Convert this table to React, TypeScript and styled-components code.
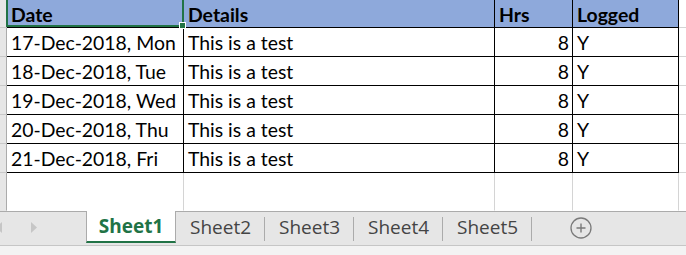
import styled, { createGlobalStyle } from 'styled-components';

const GlobalStyle = createGlobalStyle`
  html, body {
    margin: 0;
    padding: 0;
    background: #fff;
  }
  body {
    width: 686px;
    height: 255px;
    overflow: hidden;
    font-family: Lato, 'Liberation Sans', sans-serif;
  }
`;

const LINE = {
  black: '#000',
  grid: '#d4d4d4',
  none: 'transparent',
};
type Line = keyof typeof LINE;

const EXCEL_GREEN = '#217346';

const rows = [
  '17-Dec-2018, Mon',
  '18-Dec-2018, Tue',
  '19-Dec-2018, Wed',
  '20-Dec-2018, Thu',
  '21-Dec-2018, Fri',
];

const sheets = ['Sheet1', 'Sheet2', 'Sheet3', 'Sheet4', 'Sheet5'];

const Window = styled.div`
  display: flex;
  flex-direction: column;
  width: 686px;
  height: 255px;
  overflow: hidden;
`;

const Sheet = styled.div`
  display: grid;
  grid-template-columns: 7px 177px 311px 78px 106px 1fr;
  grid-template-rows: 28px repeat(5, 29px) 38px;
  flex: none;
`;

const RowHead = styled.div<{ $last?: boolean }>`
  background: #e6e6e6;
  border-right: 1px solid #ababab;
  border-bottom: 1px solid ${(p) => (p.$last ? 'transparent' : '#c8c8c8')};
`;

const Cell = styled.div<{
  $head?: boolean;
  $num?: boolean;
  $right: Line;
  $bottom: Line;
}>`
  box-sizing: border-box;
  display: flex;
  align-items: center;
  justify-content: ${(p) => (p.$num ? 'flex-end' : 'flex-start')};
  padding: 1px 3px 0 4px;
  background: ${(p) => (p.$head ? '#8ea9db' : '#fff')};
  border-right: 1px solid ${(p) => LINE[p.$right]};
  border-bottom: 1px solid ${(p) => LINE[p.$bottom]};
  font-size: 19.4px;
  font-weight: ${(p) => (p.$head ? 700 : 400)};
  color: #000;
  white-space: nowrap;
  overflow: hidden;
`;

const SelectedCell = styled(Cell)`
  position: relative;
  overflow: visible;
  z-index: 2;

  &::after {
    content: '';
    position: absolute;
    top: -2px;
    left: -1px;
    right: -1px;
    bottom: 0;
    border: 2px solid ${EXCEL_GREEN};
    pointer-events: none;
  }

  &::before {
    content: '';
    position: absolute;
    right: -3px;
    bottom: -2px;
    width: 5px;
    height: 5px;
    background: ${EXCEL_GREEN};
    border: 1px solid #fff;
    z-index: 3;
  }
`;

const TabBar = styled.div`
  display: flex;
  align-items: flex-start;
  height: 33px;
  background: #e6e6e6;
  border-top: 1px solid #ababab;
  border-bottom: 1px solid #c6c6c6;
  flex: none;
`;

const Nav = styled.div`
  width: 86px;
  height: 33px;
  flex: none;
  display: flex;
  align-items: center;
`;

const Tab = styled.div<{ $active?: boolean }>`
  position: relative;
  box-sizing: border-box;
  flex: none;
  display: flex;
  align-items: center;
  justify-content: center;
  font-family: 'Open Sans', 'Noto Sans', sans-serif;
  font-size: 19px;
  white-space: nowrap;
  ${(p) =>
    p.$active
      ? `
    width: 90px;
    height: 32px;
    margin-top: -1px;
    padding-bottom: 1px;
    background: #fff;
    border-left: 1px solid #ababab;
    border-right: 1px solid #ababab;
    border-bottom: 2px solid ${EXCEL_GREEN};
    color: ${EXCEL_GREEN};
    font-weight: 700;
  `
      : `
    width: 89px;
    height: 33px;
    padding-bottom: 3px;
    color: #444;
    &::after {
      content: '';
      position: absolute;
      right: 0;
      top: 5px;
      height: 24px;
      width: 1px;
      background: #ababab;
    }
  `}
`;

const AddSheet = styled.div`
  margin-left: 38px;
  height: 33px;
  display: flex;
  align-items: center;
  padding-bottom: 1px;
  box-sizing: border-box;
`;

const Footer = styled.div`
  flex: 1;
  background: #f3f3f3;
`;

export default function App() {
  return (
    <Window>
      <GlobalStyle />
      <Sheet>
        <RowHead />
        <SelectedCell $head $right="black" $bottom="black">
          Date
        </SelectedCell>
        <Cell $head $right="black" $bottom="black">
          Details
        </Cell>
        <Cell $head $right="black" $bottom="black">
          Hrs
        </Cell>
        <Cell $head $right="black" $bottom="black">
          Logged
        </Cell>
        <Cell $right="none" $bottom="grid" />

        {rows.map((date) => (
          <>
            <RowHead key={`h-${date}`} />
            <Cell key={`d-${date}`} $right="black" $bottom="black">
              {date}
            </Cell>
            <Cell key={`t-${date}`} $right="black" $bottom="black">
              This is a test
            </Cell>
            <Cell key={`n-${date}`} $num $right="black" $bottom="black">
              8
            </Cell>
            <Cell key={`y-${date}`} $right="black" $bottom="black">
              Y
            </Cell>
            <Cell key={`e-${date}`} $right="none" $bottom="grid" />
          </>
        ))}

        <RowHead $last />
        <Cell $right="grid" $bottom="none" />
        <Cell $right="grid" $bottom="none" />
        <Cell $right="grid" $bottom="none" />
        <Cell $right="grid" $bottom="none" />
        <Cell $right="none" $bottom="none" />
      </Sheet>

      <TabBar>
        <Nav>
          <svg width="86" height="33" viewBox="0 0 86 33">
            <polygon points="-4,15.5 2,10 2,21" fill="#c6c6c6" />
            <polygon points="31,10 37,15.5 31,21" fill="#c6c6c6" />
          </svg>
        </Nav>
        {sheets.map((name, i) => (
          <Tab key={name} $active={i === 0}>
            {name}
          </Tab>
        ))}
        <AddSheet>
          <svg width="22" height="22" viewBox="0 0 22 22">
            <circle cx="11" cy="11" r="10" fill="none" stroke="#7a7a7a" strokeWidth="1.3" />
            <path d="M11 6.5v9M6.5 11h9" stroke="#7a7a7a" strokeWidth="1.4" />
          </svg>
        </AddSheet>
      </TabBar>
      <Footer />
    </Window>
  );
}
